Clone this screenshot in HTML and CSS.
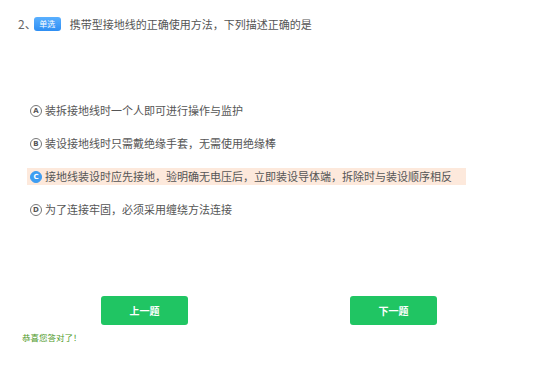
FILE: index.html
```html
<!DOCTYPE html>
<html lang="zh">
<head>
<meta charset="utf-8">
<link rel="stylesheet" href="styles.css">
</head>
<body>
<div class="page">
  <div class="question">
    <span class="num">2、</span>
    <span class="badge">单选</span>
    <span class="qtext">携带型接地线的正确使用方法，下列描述正确的是</span>
  </div>
  <div class="options">
    <div class="option"><span class="mark">A</span><span class="otext">装拆接地线时一个人即可进行操作与监护</span></div>
    <div class="option"><span class="mark">B</span><span class="otext">装设接地线时只需戴绝缘手套，无需使用绝缘棒</span></div>
    <div class="option selected"><span class="mark">C</span><span class="otext">接地线装设时应先接地，验明确无电压后，立即装设导体端，拆除时与装设顺序相反</span></div>
    <div class="option"><span class="mark">D</span><span class="otext">为了连接牢固，必须采用缠绕方法连接</span></div>
  </div>
  <div class="buttons">
    <button class="btn">上一题</button>
    <button class="btn">下一题</button>
  </div>
  <div class="msg">恭喜您答对了！</div>
</div>
</body>
</html>
```
FILE: styles.css
```css
html, body {
  margin: 0;
  padding: 0;
  background: #fff;
}
body {
  font-family: "Noto Sans CJK SC", "Noto Sans", sans-serif;
  width: 557px;
  height: 371px;
  overflow: hidden;
}
.page {
  padding-top: 16px;
}
.question {
  display: flex;
  align-items: center;
  height: 16px;
  padding-left: 18px;
}
.num {
  font-size: 12px;
  color: #666;
  line-height: 16px;
}
.badge {
  margin-left: -3px;
  width: 27px;
  height: 14px;
  border-radius: 3px;
  background: linear-gradient(#5ab0ff, #2e8ef3);
  color: #fff;
  font-size: 8px;
  line-height: 14px;
  text-align: center;
}
.qtext {
  margin-left: 9px;
  font-size: 11px;
  color: #555;
  line-height: 16px;
}
.options {
  margin-top: 70px;
  display: flex;
  flex-direction: column;
  gap: 16px;
}
.option {
  margin-left: 27px;
  width: 436px;
  height: 17px;
  padding-left: 3px;
  display: flex;
  align-items: center;
}
.option.selected {
  background: #fde9dc;
}
.mark {
  box-sizing: border-box;
  width: 12px;
  height: 12px;
  border: 1px solid #777;
  border-radius: 50%;
  font-size: 7px;
  line-height: 10px;
  text-align: center;
  color: #555;
  font-family: "DejaVu Sans", sans-serif;
  font-weight: bold;
}
.selected .mark {
  background: #3d9df2;
  border-color: #3d9df2;
  color: #fff;
}
.otext {
  margin-left: 3px;
  font-size: 11px;
  color: #555;
  line-height: 17px;
}
.buttons {
  margin-top: 78px;
  padding-left: 101px;
  display: flex;
  gap: 162px;
}
.btn {
  width: 87px;
  height: 29px;
  border: none;
  border-radius: 3px;
  background: #20c563;
  color: #fff;
  font-family: "Noto Sans CJK SC", sans-serif;
  font-size: 10px;
  font-weight: bold;
  padding: 0;
}
.msg {
  margin-top: 6px;
  padding-left: 22px;
  font-size: 8.5px;
  color: #4f9a2b;
  line-height: 12px;
}
```
